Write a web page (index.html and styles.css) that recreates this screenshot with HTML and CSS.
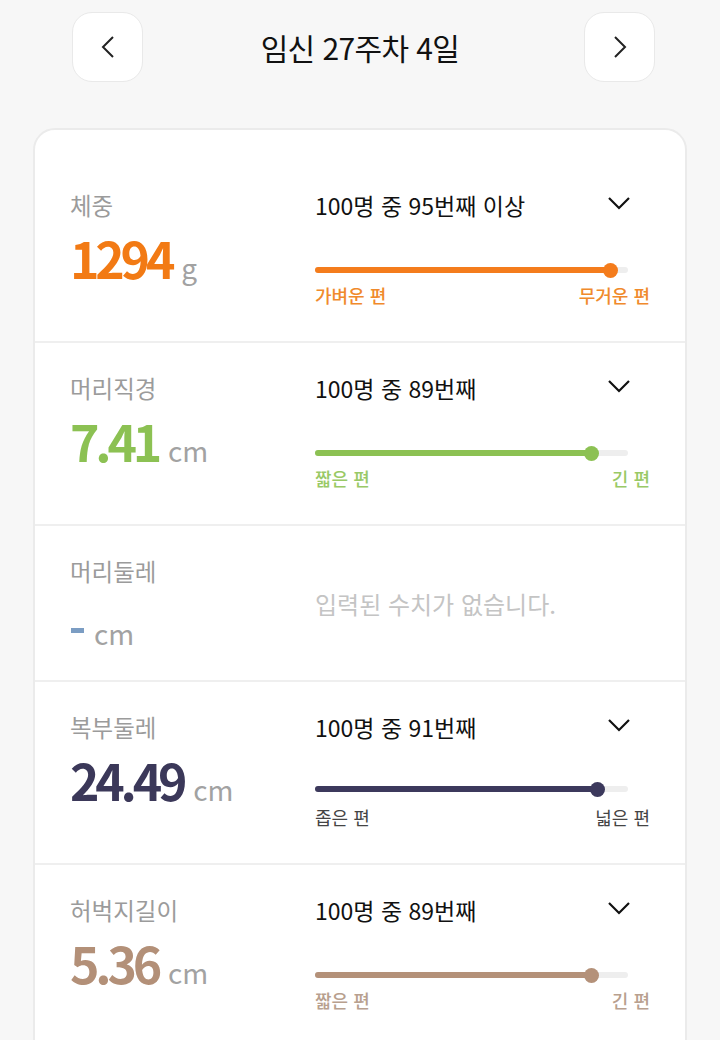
FILE: index.html
```html
<!DOCTYPE html>
<html lang="ko">
<head>
<meta charset="utf-8">
<title>임신 27주차 4일</title>
<link rel="stylesheet" href="styles.css">
</head>
<body>
<div class="page">
  <header class="topbar">
    <button class="nav-btn" aria-label="이전">
      <svg width="14" height="22" viewBox="0 0 14 22"><path d="M12 1 L2 11 L12 21" fill="none" stroke="#222" stroke-width="2"/></svg>
    </button>
    <h1 class="title">임신 27주차 4일</h1>
    <button class="nav-btn" aria-label="다음">
      <svg width="14" height="22" viewBox="0 0 14 22"><path d="M2 1 L12 11 L2 21" fill="none" stroke="#222" stroke-width="2"/></svg>
    </button>
  </header>

  <section class="card">
    <div class="row">
      <div class="left">
        <div class="label">체중</div>
        <div class="value"><span class="num orange">1294</span><span class="unit">g</span></div>
      </div>
      <div class="right">
        <div class="rank"><span>100명 중 95번째 이상</span>
          <svg class="chev" width="22" height="13" viewBox="0 0 22 13"><path d="M1 1 L11 11 L21 1" fill="none" stroke="#111" stroke-width="2.2"/></svg>
        </div>
        <div class="bar"><div class="fill bg-orange" style="width:94.6%"><span class="dot bg-orange"></span></div></div>
        <div class="ends orange-l"><span>가벼운 편</span><span>무거운 편</span></div>
      </div>
    </div>

    <div class="row">
      <div class="left">
        <div class="label">머리직경</div>
        <div class="value"><span class="num green">7.41</span><span class="unit">cm</span></div>
      </div>
      <div class="right">
        <div class="rank"><span>100명 중 89번째</span>
          <svg class="chev" width="22" height="13" viewBox="0 0 22 13"><path d="M1 1 L11 11 L21 1" fill="none" stroke="#111" stroke-width="2.2"/></svg>
        </div>
        <div class="bar"><div class="fill bg-green" style="width:88.5%"><span class="dot bg-green"></span></div></div>
        <div class="ends green-l"><span>짧은 편</span><span>긴 편</span></div>
      </div>
    </div>

    <div class="row row-empty">
      <div class="left">
        <div class="label">머리둘레</div>
        <div class="value"><span class="dash"></span><span class="unit">cm</span></div>
      </div>
      <div class="right empty">입력된 수치가 없습니다.</div>
    </div>

    <div class="row">
      <div class="left">
        <div class="label">복부둘레</div>
        <div class="value"><span class="num navy">24.49</span><span class="unit">cm</span></div>
      </div>
      <div class="right">
        <div class="rank"><span>100명 중 91번째</span>
          <svg class="chev" width="22" height="13" viewBox="0 0 22 13"><path d="M1 1 L11 11 L21 1" fill="none" stroke="#111" stroke-width="2.2"/></svg>
        </div>
        <div class="bar bar-up"><div class="fill bg-navy" style="width:90.4%"><span class="dot bg-navy"></span></div></div>
        <div class="ends navy-l"><span>좁은 편</span><span>넓은 편</span></div>
      </div>
    </div>

    <div class="row">
      <div class="left">
        <div class="label">허벅지길이</div>
        <div class="value"><span class="num brown">5.36</span><span class="unit">cm</span></div>
      </div>
      <div class="right">
        <div class="rank"><span>100명 중 89번째</span>
          <svg class="chev" width="22" height="13" viewBox="0 0 22 13"><path d="M1 1 L11 11 L21 1" fill="none" stroke="#111" stroke-width="2.2"/></svg>
        </div>
        <div class="bar"><div class="fill bg-brown" style="width:88.5%"><span class="dot bg-brown"></span></div></div>
        <div class="ends brown-l"><span>짧은 편</span><span>긴 편</span></div>
      </div>
    </div>
  </section>
</div>
</body>
</html>
```

FILE: styles.css
```css
* { box-sizing: border-box; }
html, body {
  margin: 0;
  padding: 0;
  background: #f7f7f7;
  font-family: "Noto Sans CJK KR", "Noto Sans", sans-serif;
  color: #111;
}
body { height: 1040px; overflow: hidden; }

.page { padding: 12px 33px 0; }

.topbar {
  display: flex;
  align-items: center;
  justify-content: space-between;
  padding: 0 32px 0 39px;
  height: 70px;
}
.nav-btn {
  width: 71px;
  height: 70px;
  border-radius: 20px;
  background: #fff;
  border: 1.5px solid #e9e9e9;
  display: flex;
  align-items: center;
  justify-content: center;
  padding: 0;
}
.title {
  flex: 1;
  margin: 0;
  text-align: center;
  font-size: 30px;
  font-weight: 400;
  letter-spacing: -0.6px;
  line-height: 40px;
  color: #111;
  padding-right: 7px;
}

.card {
  margin-top: 46px;
  background: #fff;
  border: 2px solid #ebebeb;
  border-radius: 22px;
  padding-top: 30px;
  min-height: 1000px;
}

.row {
  display: grid;
  grid-template-columns: 245px 1fr;
  padding: 29px 35px 34px 35px;
  border-bottom: 2px solid #efefef;
}
.row-empty { padding-bottom: 27px; }

.label {
  font-size: 23.5px;
  line-height: 32px;
  color: #9b9b9b;
}
.value {
  margin-top: 6px;
  height: 60px;
  font-size: 50px;
  line-height: 60px;
  white-space: nowrap;
}
.num {
  font-weight: 700;
  letter-spacing: -4.2px;
}
.unit {
  font-size: 28px;
  color: #a2a2a2;
  margin-left: 10px;
}
.dash {
  display: inline-block;
  width: 13px;
  height: 5px;
  background: #7b9dc3;
  margin-left: 1px;
  vertical-align: 12px;
}
.dash + .unit { margin-left: 10px; }

.orange { color: #f27a14; }
.green { color: #8cc153; }
.navy { color: #3b3859; }
.brown { color: #b39078; }

.rank {
  display: flex;
  align-items: center;
  justify-content: space-between;
  font-size: 23px;
  line-height: 32px;
  color: #111;
  letter-spacing: 0;
  padding-right: 20px;
}
.chev { display: block; margin-top: -4px; }

.bar {
  margin-top: 46px;
  margin-right: 22px;
  height: 6px;
  border-radius: 3px;
  background: #eeeeee;
  position: relative;
}
.bar-up { margin-top: 43px; }
.bar-up + .ends { margin-top: 13px; }
.fill {
  height: 6px;
  border-radius: 3px;
  position: relative;
}
.dot {
  position: absolute;
  right: -7px;
  top: -4px;
  width: 15px;
  height: 15px;
  border-radius: 50%;
}
.bg-orange { background: #f47c1c; }
.bg-green { background: #8cc153; }
.bg-navy { background: #3c395c; }
.bg-brown { background: #b49179; }

.ends {
  margin-top: 10px;
  display: flex;
  justify-content: space-between;
  font-size: 18px;
  line-height: 24px;
  font-weight: 500;
}
.orange-l { color: #f08a2c; }
.green-l { color: #99c966; }
.navy-l { color: #444444; font-weight: 400; }
.brown-l { color: #b8a08e; }

.empty {
  font-size: 24px;
  color: #c4c4c4;
  padding-top: 33px;
  line-height: 32px;
}
```
